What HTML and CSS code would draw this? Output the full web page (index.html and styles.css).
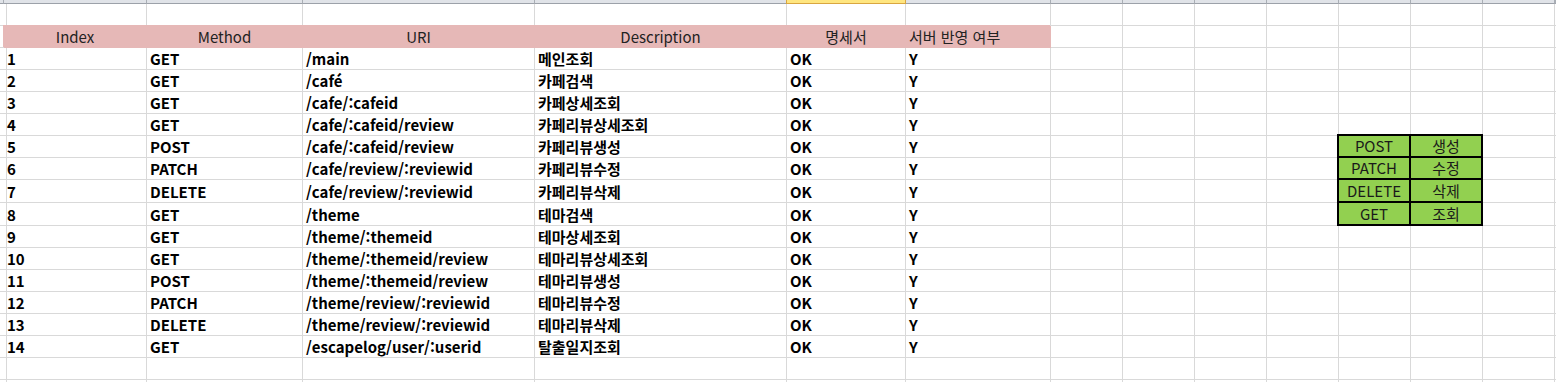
FILE: index.html
```html
<!DOCTYPE html>
<html lang="ko">
<head>
<meta charset="utf-8">
<title>API 명세</title>
<link rel="stylesheet" href="styles.css">
</head>
<body>
<div class="sheet">
  <div class="row colhead">
    <div class="c"></div><div class="c"></div><div class="c"></div><div class="c"></div><div class="c"></div><div class="c sel"></div><div class="c"></div><div class="c"></div><div class="c"></div><div class="c"></div><div class="c"></div><div class="c"></div><div class="c"></div><div class="c"></div><div class="c"></div>
  </div>
  <div class="row">
    <div class="c"></div><div class="c"></div><div class="c"></div><div class="c"></div><div class="c"></div><div class="c"></div><div class="c"></div><div class="c"></div><div class="c"></div><div class="c"></div><div class="c"></div><div class="c"></div><div class="c"></div><div class="c"></div><div class="c"></div>
  </div>
  <div class="row head">
    <div class="c"></div>
    <div class="head-band">
      <div class="c h center">Index</div><div class="c h center">Method</div><div class="c h center">URI</div><div class="c h center">Description</div><div class="c h center">명세서</div><div class="c h">서버 반영 여부</div>
    </div>
    <div class="c"></div><div class="c"></div><div class="c"></div><div class="c"></div><div class="c"></div><div class="c"></div><div class="c"></div><div class="c"></div>
  </div>

  <div class="row data"><div class="c"></div><div class="c">1</div><div class="c">GET</div><div class="c">/main</div><div class="c">메인조회</div><div class="c">OK</div><div class="c">Y</div><div class="c"></div><div class="c"></div><div class="c"></div><div class="c"></div><div class="c"></div><div class="c"></div><div class="c"></div><div class="c"></div></div>
  <div class="row data"><div class="c"></div><div class="c">2</div><div class="c">GET</div><div class="c">/café</div><div class="c">카페검색</div><div class="c">OK</div><div class="c">Y</div><div class="c"></div><div class="c"></div><div class="c"></div><div class="c"></div><div class="c"></div><div class="c"></div><div class="c"></div><div class="c"></div></div>
  <div class="row data"><div class="c"></div><div class="c">3</div><div class="c">GET</div><div class="c">/cafe/:cafeid</div><div class="c">카페상세조회</div><div class="c">OK</div><div class="c">Y</div><div class="c"></div><div class="c"></div><div class="c"></div><div class="c"></div><div class="c"></div><div class="c"></div><div class="c"></div><div class="c"></div></div>
  <div class="row data"><div class="c"></div><div class="c">4</div><div class="c">GET</div><div class="c">/cafe/:cafeid/review</div><div class="c">카페리뷰상세조회</div><div class="c">OK</div><div class="c">Y</div><div class="c"></div><div class="c"></div><div class="c"></div><div class="c"></div><div class="c"></div><div class="c"></div><div class="c"></div><div class="c"></div></div>
  <div class="row data"><div class="c"></div><div class="c">5</div><div class="c">POST</div><div class="c">/cafe/:cafeid/review</div><div class="c">카페리뷰생성</div><div class="c">OK</div><div class="c">Y</div><div class="c"></div><div class="c"></div><div class="c"></div><div class="c"></div><div class="c lg lg-l lg-t">POST</div><div class="c lg lg-t">생성</div><div class="c"></div><div class="c"></div></div>
  <div class="row data"><div class="c"></div><div class="c">6</div><div class="c">PATCH</div><div class="c">/cafe/review/:reviewid</div><div class="c">카페리뷰수정</div><div class="c">OK</div><div class="c">Y</div><div class="c"></div><div class="c"></div><div class="c"></div><div class="c"></div><div class="c lg lg-l">PATCH</div><div class="c lg">수정</div><div class="c"></div><div class="c"></div></div>
  <div class="row data tall"><div class="c"></div><div class="c">7</div><div class="c">DELETE</div><div class="c">/cafe/review/:reviewid</div><div class="c">카페리뷰삭제</div><div class="c">OK</div><div class="c">Y</div><div class="c"></div><div class="c"></div><div class="c"></div><div class="c"></div><div class="c lg lg-l">DELETE</div><div class="c lg">삭제</div><div class="c"></div><div class="c"></div></div>
  <div class="row data tall"><div class="c"></div><div class="c">8</div><div class="c">GET</div><div class="c">/theme</div><div class="c">테마검색</div><div class="c">OK</div><div class="c">Y</div><div class="c"></div><div class="c"></div><div class="c"></div><div class="c"></div><div class="c lg lg-l">GET</div><div class="c lg">조회</div><div class="c"></div><div class="c"></div></div>
  <div class="row data"><div class="c"></div><div class="c">9</div><div class="c">GET</div><div class="c">/theme/:themeid</div><div class="c">테마상세조회</div><div class="c">OK</div><div class="c">Y</div><div class="c"></div><div class="c"></div><div class="c"></div><div class="c"></div><div class="c"></div><div class="c"></div><div class="c"></div><div class="c"></div></div>
  <div class="row data"><div class="c"></div><div class="c">10</div><div class="c">GET</div><div class="c">/theme/:themeid/review</div><div class="c">테마리뷰상세조회</div><div class="c">OK</div><div class="c">Y</div><div class="c"></div><div class="c"></div><div class="c"></div><div class="c"></div><div class="c"></div><div class="c"></div><div class="c"></div><div class="c"></div></div>
  <div class="row data"><div class="c"></div><div class="c">11</div><div class="c">POST</div><div class="c">/theme/:themeid/review</div><div class="c">테마리뷰생성</div><div class="c">OK</div><div class="c">Y</div><div class="c"></div><div class="c"></div><div class="c"></div><div class="c"></div><div class="c"></div><div class="c"></div><div class="c"></div><div class="c"></div></div>
  <div class="row data"><div class="c"></div><div class="c">12</div><div class="c">PATCH</div><div class="c">/theme/review/:reviewid</div><div class="c">테마리뷰수정</div><div class="c">OK</div><div class="c">Y</div><div class="c"></div><div class="c"></div><div class="c"></div><div class="c"></div><div class="c"></div><div class="c"></div><div class="c"></div><div class="c"></div></div>
  <div class="row data"><div class="c"></div><div class="c">13</div><div class="c">DELETE</div><div class="c">/theme/review/:reviewid</div><div class="c">테마리뷰삭제</div><div class="c">OK</div><div class="c">Y</div><div class="c"></div><div class="c"></div><div class="c"></div><div class="c"></div><div class="c"></div><div class="c"></div><div class="c"></div><div class="c"></div></div>
  <div class="row data"><div class="c"></div><div class="c">14</div><div class="c">GET</div><div class="c">/escapelog/user/:userid</div><div class="c">탈출일지조회</div><div class="c">OK</div><div class="c">Y</div><div class="c"></div><div class="c"></div><div class="c"></div><div class="c"></div><div class="c"></div><div class="c"></div><div class="c"></div><div class="c"></div></div>

  <div class="row">
    <div class="c"></div><div class="c"></div><div class="c"></div><div class="c"></div><div class="c"></div><div class="c"></div><div class="c"></div><div class="c"></div><div class="c"></div><div class="c"></div><div class="c"></div><div class="c"></div><div class="c"></div><div class="c"></div><div class="c"></div>
  </div>
  <div class="row">
    <div class="c"></div><div class="c"></div><div class="c"></div><div class="c"></div><div class="c"></div><div class="c"></div><div class="c"></div><div class="c"></div><div class="c"></div><div class="c"></div><div class="c"></div><div class="c"></div><div class="c"></div><div class="c"></div><div class="c"></div>
  </div>
</div>
</body>
</html>
```

FILE: styles.css
```css
* { box-sizing: border-box; }

html, body {
  margin: 0;
  padding: 0;
  background: #ffffff;
  overflow: hidden;
}

body {
  font-family: "Noto Sans CJK KR", "Noto Sans", sans-serif;
  font-size: 15px;
  color: #000;
}

.sheet {
  width: 1556px;
  height: 382px;
  overflow: hidden;
}

.row {
  display: grid;
  grid-template-columns: 4px 143px 156px 232px 252px 119px 145px repeat(7, 72px) 1px;
  height: 22px;
}

.row.tall { height: 23px; }

.c {
  border-right: 1px solid #d9d9d9;
  border-bottom: 1px solid #d9d9d9;
  display: flex;
  align-items: flex-end;
  padding: 0 3px 1px 3px;
  line-height: 18px;
  white-space: nowrap;
  overflow: visible;
  min-width: 0;
}

/* column header strip */
.colhead { height: 4px; }
.colhead .c {
  background: #e0e3e8;
  border-right-color: #a9aeb5;
  border-bottom-color: #9ca1a9;
  padding: 0;
}
.colhead .c.sel {
  background: #ffe680;
  border-right-color: #d9a640;
  border-bottom-color: #d9a640;
  box-shadow: -1px 0 0 #d9a640;
}

/* header band */
.head-band {
  grid-column: 2 / span 6;
  display: grid;
  grid-template-columns: 143px 156px 232px 252px 119px 145px;
  background: #e6b8b7;
  box-shadow: -1px -1px 0 #e6b8b7;
}
.head .c.h {
  border-color: #e6b8b7;
  color: #222;
  font-weight: 400;
}
.center { justify-content: center; }

/* data rows */
.data .c { font-weight: 700; }

/* legend */
.data .c.lg {
  background: #92d050;
  justify-content: center;
  font-weight: 400;
  color: #1a1a1a;
  border-right: 2px solid #000;
  border-bottom: 2px solid #000;
}
.data .c.lg-l { box-shadow: -2px 0 0 #000; }
.data .c.lg-t { box-shadow: 0 -2px 0 #000; }
.data .c.lg-l.lg-t { box-shadow: -2px 0 0 #000, 0 -2px 0 #000, -2px -2px 0 #000; }
```
